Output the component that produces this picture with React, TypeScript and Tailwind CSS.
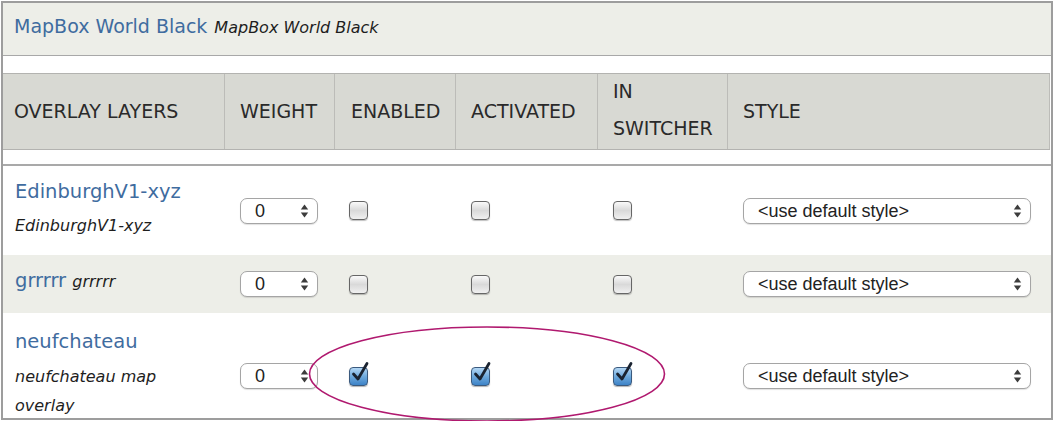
import React from "react";

function Arrows({ className }: { className?: string }) {
  return (
    <svg width="9" height="14" viewBox="0 0 9 14" className={className}>
      <path d="M4.5 0.5 L8.2 5.5 L0.8 5.5 Z" fill="#3c3c3c" />
      <path d="M4.5 13.5 L8.2 8.5 L0.8 8.5 Z" fill="#3c3c3c" />
    </svg>
  );
}

function Select({ text, width }: { text: string; width: string }) {
  return (
    <div
      className={`${width} h-[26px] rounded-[7px] border border-[#a5a5a5] bg-white shadow-[0_1px_1px_rgba(0,0,0,0.12)] flex items-center justify-between pl-[14px] pr-[8px] font-['Liberation_Sans',Arial,sans-serif] text-[18px] text-[#222]`}
    >
      <span className="leading-none">{text}</span>
      <Arrows />
    </div>
  );
}

function Checkbox({ checked }: { checked?: boolean }) {
  if (checked) {
    return (
      <div className="relative w-[19px] h-[19px]">
        <div className="w-[19px] h-[19px] rounded-[4px] border-[1.5px] border-[#3b5a7e] bg-gradient-to-b from-[#b3d7f5] via-[#6ea9dc] to-[#3d83c7] shadow-[0_1px_1px_rgba(0,0,0,0.3)]" />
        <svg
          width="22"
          height="24"
          viewBox="0 0 22 24"
          className="absolute left-[1px] top-[-6px]"
        >
          <path
            d="M3.5 13 L8 18 L17 2.5"
            fill="none"
            stroke="#1a2331"
            strokeWidth="2.8"
            strokeLinecap="round"
            strokeLinejoin="round"
          />
        </svg>
      </div>
    );
  }
  return (
    <div className="w-[19px] h-[19px] rounded-[4px] border-[1.5px] border-[#666] bg-gradient-to-b from-[#fafafa] via-[#d9d9d9] to-[#f0f0f0] shadow-[0_1px_1px_rgba(0,0,0,0.25)]" />
  );
}

const COLS = [
  "w-[222px]",
  "w-[110px]",
  "w-[121px]",
  "w-[142px]",
  "w-[130px]",
];

function Row({
  bg,
  name,
  children,
  checked,
  pad,
}: {
  bg: string;
  name: React.ReactNode;
  children?: React.ReactNode;
  checked?: boolean;
  pad: string;
}) {
  return (
    <div className={`flex ${bg}`}>
      <div className={`${COLS[0]} shrink-0 pl-[12px] ${pad}`}>
        {name}
        {children}
      </div>
      <div className={`${COLS[1]} shrink-0 pl-[15px] flex items-center`}>
        <Select text="0" width="w-[78px]" />
      </div>
      <div className={`${COLS[2]} shrink-0 pl-[14px] flex items-center`}>
        <Checkbox checked={checked} />
      </div>
      <div className={`${COLS[3]} shrink-0 pl-[15px] flex items-center`}>
        <Checkbox checked={checked} />
      </div>
      <div className={`${COLS[4]} shrink-0 pl-[15px] flex items-center`}>
        <Checkbox checked={checked} />
      </div>
      <div className="flex-1 pl-[15px] flex items-center">
        <Select text="<use default style>" width="w-[288px]" />
      </div>
    </div>
  );
}

export default function App() {
  const blue = "text-[#3f6c9f] text-[19.5px] leading-[32px] font-['DejaVu_Sans',sans-serif]";
  const ital =
    "italic text-[#1e1e1e] text-[16px] leading-[27px] font-['DejaVu_Sans',sans-serif]";
  return (
    <div className="relative w-[1054px] h-[421px] bg-white pt-[1px] pl-[1px]">
      <div className="w-[1052px] h-[419px] border-2 border-[#9d9d9d] overflow-hidden bg-white font-['DejaVu_Sans',sans-serif]">
        {/* caption */}
        <div className="h-[53px] bg-[#edeee8] border-b border-[#a8a8a8] pt-[11px] pl-[11px] flex items-baseline gap-[7px]">
          <span className="text-[#3f6c9f] text-[19px] leading-[24px]">MapBox World Black</span>
          <span className="italic text-[#1e1e1e] text-[16px] leading-[24px]">MapBox World Black</span>
        </div>
        <div className="h-[17px]" />
        {/* header */}
        <div className="flex h-[77px] bg-[#d8d9d3] border-y border-[#b3b3b0] text-[#2a2a2a] text-[19px] mr-[1px]">
          <div className={`${COLS[0]} shrink-0 border-r border-[#bcbcb8] pl-[11px] flex items-center`}>
            OVERLAY LAYERS
          </div>
          <div className={`${COLS[1]} shrink-0 border-r border-[#bcbcb8] pl-[15px] flex items-center`}>
            WEIGHT
          </div>
          <div className={`${COLS[2]} shrink-0 border-r border-[#bcbcb8] pl-[16px] flex items-center`}>
            ENABLED
          </div>
          <div className={`${COLS[3]} shrink-0 border-r border-[#bcbcb8] pl-[15px] flex items-center`}>
            ACTIVATED
          </div>
          <div className={`${COLS[4]} shrink-0 border-r border-[#bcbcb8] pl-[15px] pb-[3px] flex items-center leading-[37px]`}>
            <div>
              IN
              <br />
              SWITCHER
            </div>
          </div>
          <div className="flex-1 border-r border-[#bcbcb8] pl-[15px] flex items-center">STYLE</div>
        </div>
        <div className="h-[14px]" />
        <div className="h-[2px] bg-[#a9a9a9]" />
        {/* rows */}
        <Row
          bg="bg-white"
          pad="pt-[10px] pb-[16px]"
          name={<div className={blue}>EdinburghV1-xyz</div>}
        >
          <div className={`${ital} mt-[4px]`}>EdinburghV1-xyz</div>
        </Row>
        <Row
          bg="bg-[#edeee8]"
          pad="pt-[10px] pb-[16px]"
          name={
            <div className={blue}>
              grrrrr <span className={ital}>grrrrr</span>
            </div>
          }
        />
        <Row
          bg="bg-white"
          pad="pt-[13px] pb-[19px]"
          checked
          name={<div className={blue}>neufchateau</div>}
        >
          <div className={`${ital} mt-[4px] leading-[29px]`}>
            neufchateau map
            <br />
            overlay
          </div>
        </Row>
      </div>
      <svg
        width="360"
        height="100"
        viewBox="0 0 360 100"
        className="absolute left-[307px] top-[325px] pointer-events-none"
      >
        <ellipse
          cx="180"
          cy="49"
          rx="177.5"
          ry="47"
          fill="none"
          stroke="#b0196f"
          strokeWidth="1.6"
        />
      </svg>
    </div>
  );
}
